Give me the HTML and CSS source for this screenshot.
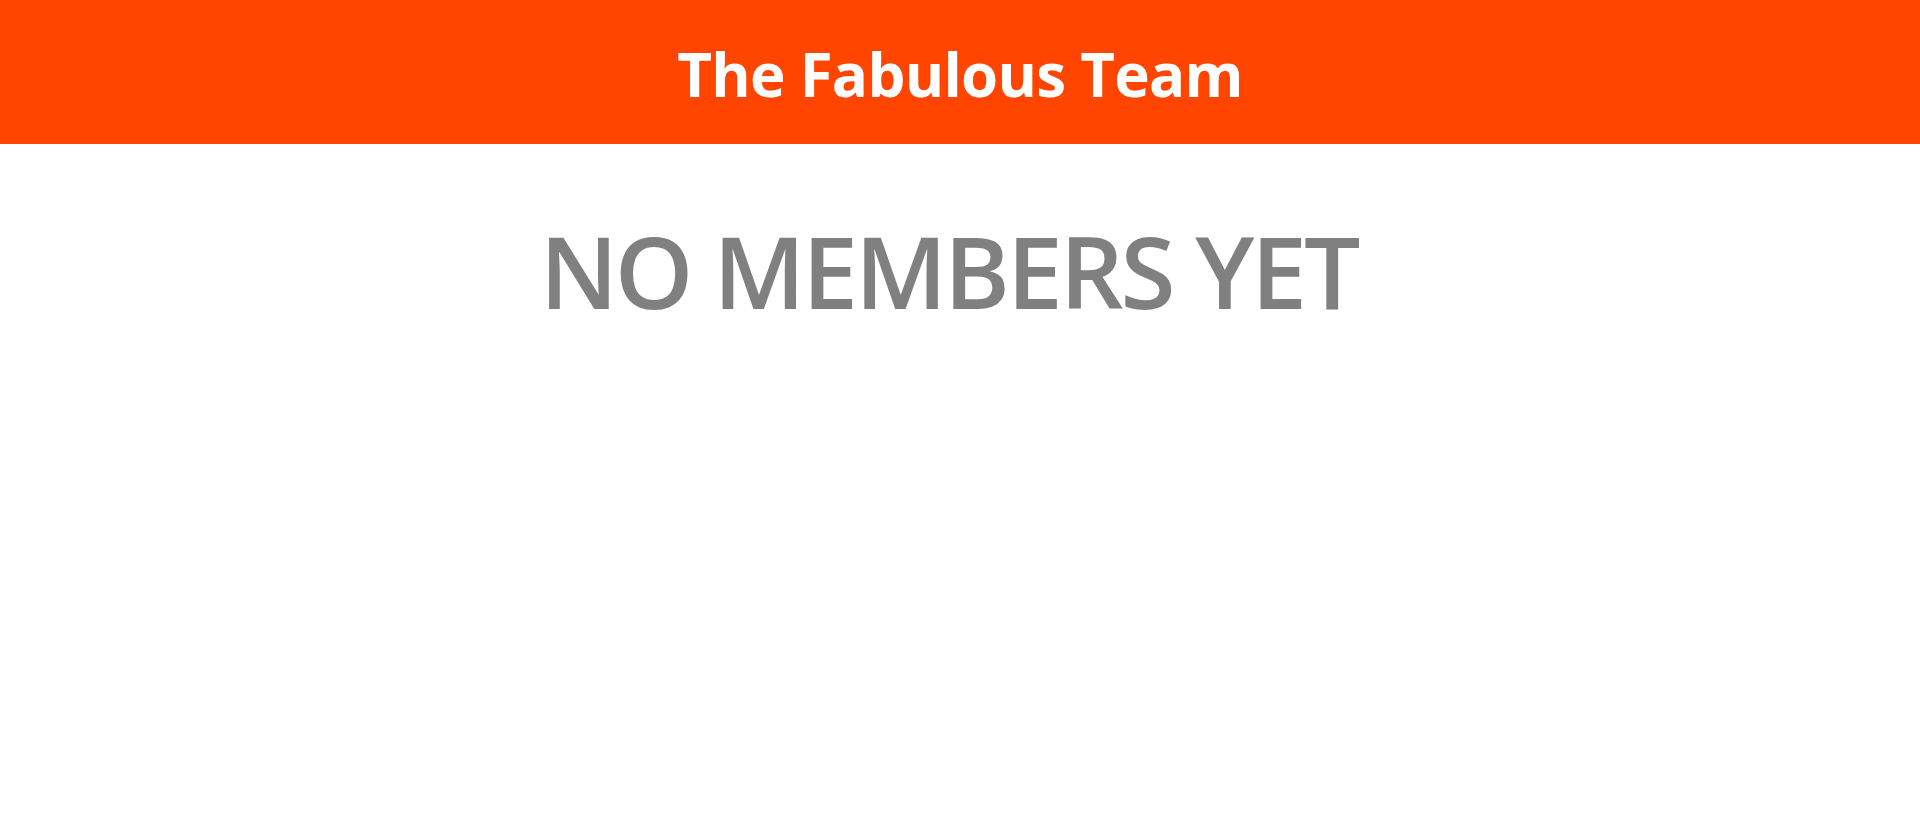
FILE: index.html
```html
<!DOCTYPE html>
<html lang="en">
<head>
<meta charset="utf-8">
<title>The Fabulous Team</title>
<link rel="stylesheet" href="styles.css">
</head>
<body>
<header class="site-header">
  <h1 class="site-title">The Fabulous Team</h1>
</header>
<main class="content">
  <h2 class="empty-message">NO MEMBERS YET</h2>
</main>
</body>
</html>
```
FILE: styles.css
```css
html, body {
  margin: 0;
  padding: 0;
  background: #ffffff;
  font-family: "Open Sans", "Noto Sans", sans-serif;
}

.site-header {
  height: 144px;
  box-sizing: border-box;
  padding-top: 4px;
  background: #ff4500;
  display: flex;
  align-items: center;
  justify-content: center;
}

.site-title {
  margin: 0;
  color: #ffffff;
  font-size: 60px;
  font-weight: 700;
  line-height: 1;
  letter-spacing: -0.7px;
}

.content {
  display: flex;
  justify-content: center;
  padding-top: 76px;
}

.empty-message {
  margin: 0;
  padding-right: 23px;
  color: #808080;
  font-size: 100px;
  font-weight: 600;
  line-height: 1;
  letter-spacing: -3.1px;
}
```
